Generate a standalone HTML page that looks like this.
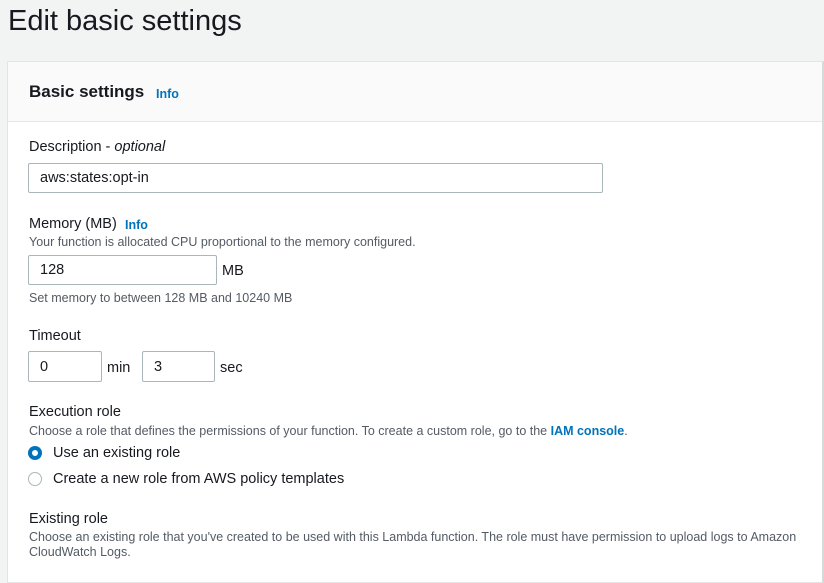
<!DOCTYPE html>
<html><head><meta charset="utf-8"><style>
body{margin:0;width:824px;height:562px;overflow:hidden;background:#f2f3f3;font-family:"Liberation Sans",sans-serif;color:#16191f;position:relative}
.a{position:absolute;white-space:nowrap}
.panel{position:absolute;left:7px;top:61px;width:814px;height:520px;background:#fff;border:1px solid #e3e5e5;border-right:2px solid #d5dbdb;}
.hdr{position:absolute;left:0;top:0;right:0;height:59px;background:#fafafa;border-bottom:1px solid #e6e8e8}
.in{position:absolute;border:1px solid #aab7b8;border-radius:2px;background:#fff;box-sizing:border-box;font-size:14.5px;padding:8px 0 0 11px;color:#16191f}
.lbl{font-size:14.5px;color:#16191f}
.sm{font-size:12.5px;color:#545b64}
.info{color:#0073bb;font-weight:bold;font-size:12.5px}
</style></head><body>
<div class="a" style="left:8px;top:5px;font-size:29px;">Edit basic settings</div>
<div class="panel"><div class="hdr"></div></div>
<div class="a" style="left:29px;top:82px;font-size:17px;font-weight:bold">Basic settings</div>
<div class="a info" style="left:156px;top:87px">Info</div>
<div class="a lbl" style="left:29px;top:139px">Description - <i>optional</i></div>
<div class="in" style="left:28px;top:163px;width:575px;height:30px;padding-top:6px">aws:states:opt-in</div>
<div class="a lbl" style="left:29px;top:216px">Memory (MB)</div>
<div class="a info" style="left:125px;top:218px">Info</div>
<div class="a sm" style="left:29px;top:235px">Your function is allocated CPU proportional to the memory configured.</div>
<div class="in" style="left:28px;top:255px;width:189px;height:30px;padding-top:6px">128</div>
<div class="a lbl" style="left:222px;top:263px">MB</div>
<div class="a sm" style="left:29px;top:291px">Set memory to between 128 MB and 10240 MB</div>
<div class="a lbl" style="left:29px;top:328px">Timeout</div>
<div class="in" style="left:28px;top:351px;width:74px;height:31px;padding-top:7px">0</div>
<div class="a lbl" style="left:107px;top:360px">min</div>
<div class="in" style="left:142px;top:351px;width:73px;height:31px;padding-top:7px">3</div>
<div class="a lbl" style="left:220px;top:360px">sec</div>
<div class="a lbl" style="left:29px;top:404px">Execution role</div>
<div class="a sm" style="left:29px;top:424px">Choose a role that defines the permissions of your function. To create a custom role, go to the <b style="color:#0073bb">IAM console</b>.</div>
<div class="a" style="left:28px;top:446px;width:14px;height:14px;border-radius:50%;background:#0073bb"><div style="position:absolute;left:4px;top:4px;width:6px;height:6px;border-radius:50%;background:#fff"></div></div>
<div class="a lbl" style="left:53px;top:445px">Use an existing role</div>
<div class="a" style="left:28px;top:472px;width:12px;height:12px;border-radius:50%;border:1px solid #aab7b8"></div>
<div class="a lbl" style="left:53px;top:471px">Create a new role from AWS policy templates</div>
<div class="a lbl" style="left:29px;top:511px">Existing role</div>
<div class="a sm" style="left:29px;top:530px">Choose an existing role that you've created to be used with this Lambda function. The role must have permission to upload logs to Amazon</div>
<div class="a sm" style="left:29px;top:545px">CloudWatch Logs.</div>
</body></html>
